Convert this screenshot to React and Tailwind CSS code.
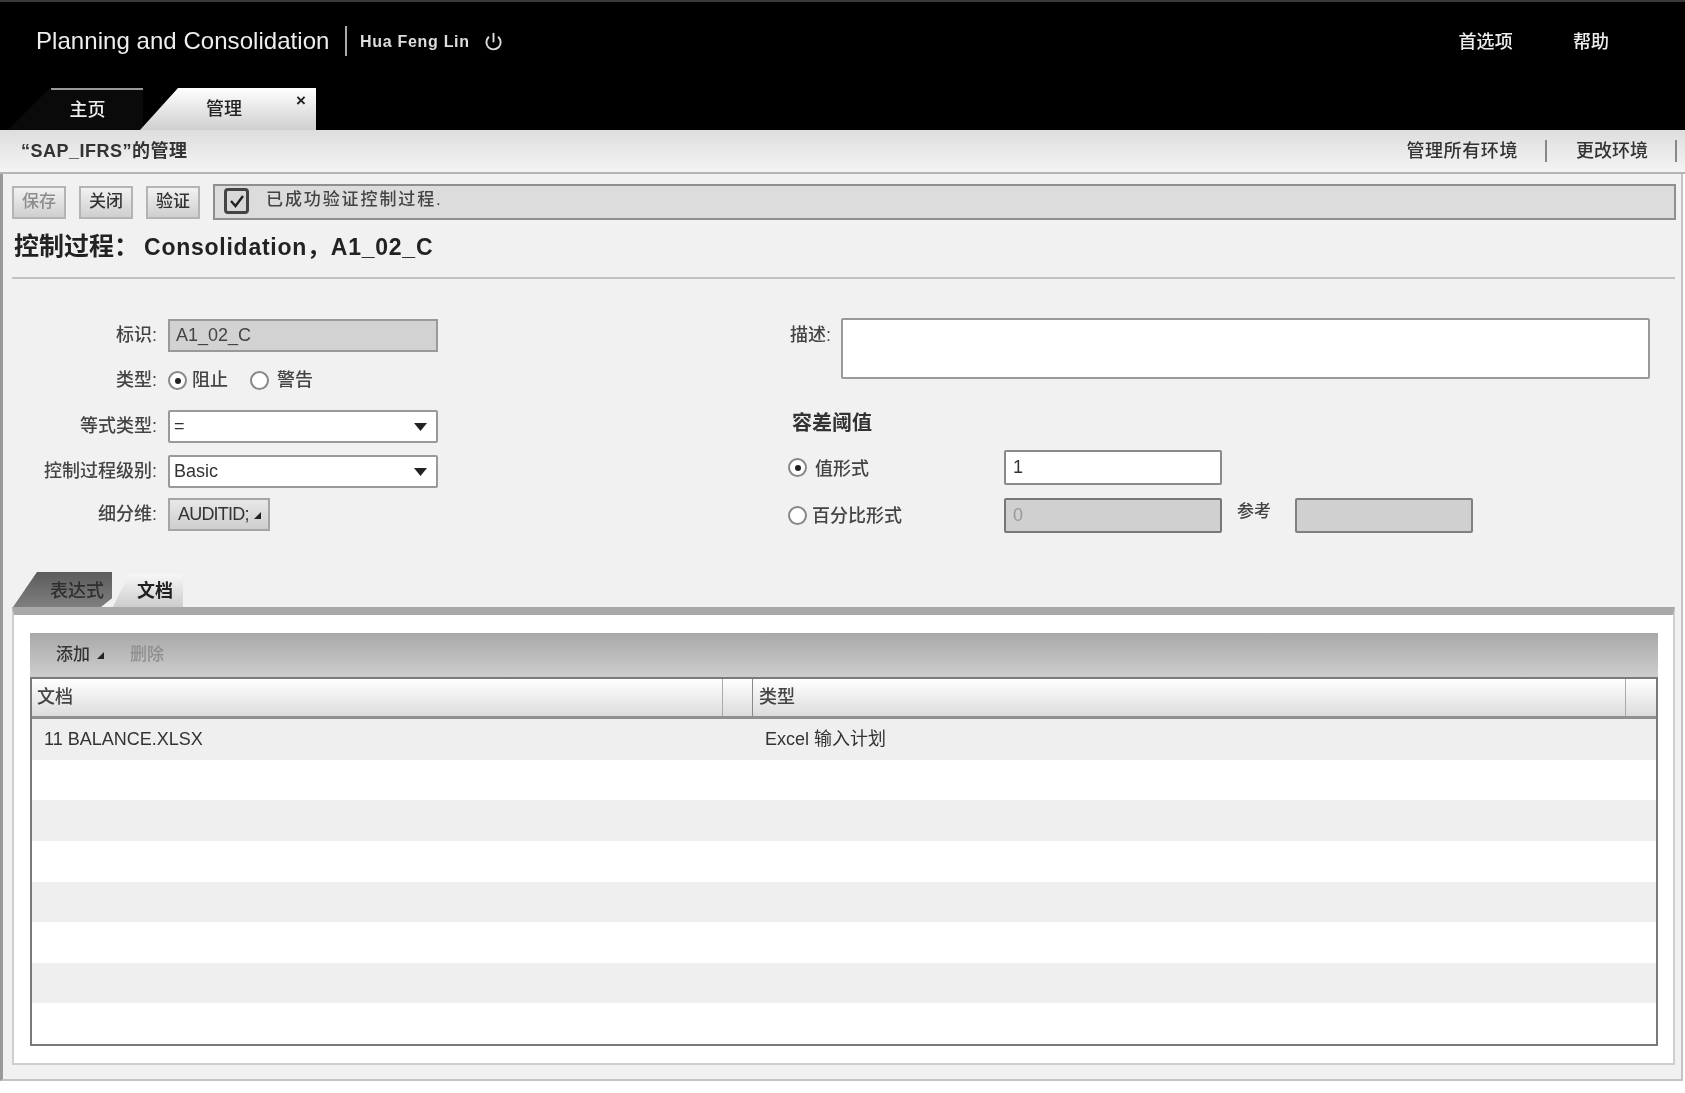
import { Power } from "lucide-react";

const font = { fontFamily: '"Liberation Sans", "Noto Sans CJK SC", sans-serif' };

const rows = [
  { file: "11 BALANCE.XLSX", type: "Excel 输入计划" },
  {}, {}, {}, {}, {}, {}, {},
];

function Radio({ checked, className = "" }) {
  return (
    <span className={`flex h-[19px] w-[19px] shrink-0 items-center justify-center rounded-full border-2 border-[#888] bg-white ${className}`}>
      {checked && <span className="h-[6px] w-[6px] rounded-full bg-[#222]" />}
    </span>
  );
}

function Corner() {
  return (
    <svg width="8" height="8" viewBox="0 0 8 8" className="shrink-0">
      <path d="M8 1V8H1Z" fill="#222" />
    </svg>
  );
}

function Select({ value, className = "" }) {
  return (
    <div className={`flex h-[33px] w-[270px] items-center justify-between rounded-[2px] border-2 border-[#999] bg-white pl-[4px] pr-[9px] text-[18px] text-[#333] ${className}`}>
      <span>{value}</span>
      <svg width="13" height="8" viewBox="0 0 13 8">
        <path d="M0 0H13L6.5 8Z" fill="#222" />
      </svg>
    </div>
  );
}

function ToolButton({ label, disabled }) {
  return (
    <div className={`flex h-[33px] w-[54px] items-center justify-center border-2 border-[#b4b4b4] bg-gradient-to-b from-[#f2f2f2] to-[#cfcfcf] text-[17px] font-medium ${disabled ? "text-[#8c8c8c]" : "text-[#333]"}`}>
      {label}
    </div>
  );
}

function Label({ children }) {
  return <div className="w-[155px] shrink-0 pr-px text-right text-[18px] font-medium text-[#444]">{children}:</div>;
}

export default function App() {
  return (
    <div style={font} className="flex h-[1093px] w-full flex-col overflow-hidden bg-white blur-[0.6px]">
      <header className="flex h-[130px] flex-col border-t-2 border-[#3a3a3a] bg-black text-[#eee]">
        <div className="flex h-[77px] items-center pl-[36px] pr-[76px]">
          <span className="w-[293px] whitespace-nowrap text-[24px] tracking-[0.05px]">Planning and Consolidation</span>
          <span className="ml-[16px] h-[30px] w-[2px] bg-[#aaa]" />
          <span className="ml-[13px] pt-[2px] text-[16px] font-semibold tracking-[0.7px] text-[#ddd]">Hua Feng Lin</span>
          <Power size={19} strokeWidth={2.4} className="ml-[14px] mt-[2px] text-[#ddd]" />
          <span className="ml-auto pt-[3px] text-[18px] font-medium tracking-[0.2px]">首选项</span>
          <span className="ml-[60px] pt-[3px] text-[18px] font-medium">帮助</span>
        </div>
        <div className="flex h-[51px] items-end">
          <div className="relative ml-[8px] flex h-[42px] w-[135px] items-center justify-center bg-[#0a0a0a] pl-[24px] pt-[2px] text-[18px] font-medium text-[#eee] [clip-path:polygon(0_100%,42px_0,100%_0,100%_100%)]">
            <span className="absolute right-0 top-0 h-[2px] w-[92px] bg-[#999]" />
            主页
          </div>
          <div className="relative -ml-[3px] flex h-[42px] w-[176px] items-center justify-center bg-gradient-to-b from-white to-[#cfcfcf] pr-[8px] text-[18px] font-medium text-[#222] [clip-path:polygon(0_100%,38px_0,100%_0,100%_100%)]">
            管理
            <span className="absolute right-[10px] top-[4px] text-[17px] font-bold leading-none">×</span>
          </div>
        </div>
      </header>

      <div className="flex h-[44px] shrink-0 items-center border-b-2 border-[#b5b5b5] bg-gradient-to-b from-[#dedede] to-[#f4f4f4] pl-[21px] pr-[8px] text-[#333]">
        <span className="text-[18px] font-bold tracking-[0.5px]">“SAP_IFRS”的管理</span>
        <span className="ml-auto text-[18px] font-medium tracking-[0.6px]">管理所有环境</span>
        <span className="ml-[27px] h-[22px] w-[2px] bg-[#888]" />
        <span className="ml-[29px] text-[18px] font-medium">更改环境</span>
        <span className="ml-[27px] h-[22px] w-[2px] bg-[#888]" />
      </div>

      <div className="mr-[2px] flex h-[907px] shrink-0 flex-col border-b-2 border-l-[3px] border-r-2 border-[#c4c4c4] border-l-[#9a9a9a] bg-[#f1f1f1] pb-[14px]">
        <div className="mt-[10px] flex h-[36px] shrink-0 items-center pl-[9px] pr-[5px]">
          <div className="flex gap-[13px]">
            <ToolButton label="保存" disabled />
            <ToolButton label="关闭" />
            <ToolButton label="验证" />
          </div>
          <div className="ml-[13px] flex h-[36px] flex-1 items-center border-2 border-[#8f8f8f] bg-[#dcdcdc] pb-[3px] pl-[9px]">
            <span className="flex h-[26px] w-[25px] items-center justify-center rounded-[4px] border-[3px] border-[#444] bg-[#d8d8d8]">
              <svg width="16" height="14" viewBox="0 0 16 14">
                <path d="M2 7L6.5 12L14 2" fill="none" stroke="#222" strokeWidth="2.4" />
              </svg>
            </span>
            <span className="ml-[17px] pb-[2px] text-[17px] font-medium tracking-[1.9px] text-[#444]">已成功验证控制过程.</span>
          </div>
        </div>

        <div className="ml-[9px] mr-[6px] flex h-[59px] shrink-0 items-center border-b-2 border-[#c2c2c2] pl-[2px] pb-[3px] text-[#222]">
          <span className="text-[25px] font-bold">控制过程：</span>
          <span className="ml-[5px] text-[23px] font-bold tracking-[0.75px]">Consolidation，A1_02_C</span>
        </div>

        <div className="flex h-[293px] shrink-0 pt-[40px]">
          <div className="w-[785px] shrink-0">
            <div className="flex h-[33px] items-center gap-[10px]">
              <Label>标识</Label>
              <div className="flex h-[33px] w-[270px] items-center border-2 border-[#999] bg-[#d2d2d2] pl-[6px] text-[18px] text-[#444]">A1_02_C</div>
            </div>
            <div className="mt-[12px] flex h-[33px] items-center gap-[10px]">
              <Label>类型</Label>
              <div className="flex items-center text-[18px] font-medium text-[#444]">
                <Radio checked />
                <span className="ml-[5px]">阻止</span>
                <Radio className="ml-[22px]" />
                <span className="ml-[8px]">警告</span>
              </div>
            </div>
            <div className="mt-[13px] flex h-[33px] items-center gap-[10px]">
              <Label>等式类型</Label>
              <Select value="=" />
            </div>
            <div className="mt-[12px] flex h-[33px] items-center gap-[10px]">
              <Label>控制过程级别</Label>
              <Select value="Basic" />
            </div>
            <div className="mt-[10px] flex h-[33px] items-center gap-[10px]">
              <Label>细分维</Label>
              <div className="flex h-[33px] w-[102px] items-center gap-[4px] border-2 border-[#a5a5a5] bg-gradient-to-b from-[#e8e8e8] to-[#cecece] pl-[8px] text-[18px] tracking-[-0.8px] text-[#333]">
                AUDITID;
                <Corner />
              </div>
            </div>
          </div>

          <div className="flex-1 pr-[31px]">
            <div className="-mt-px flex h-[61px] items-start">
              <span className="ml-[2px] mt-[5px] w-[51px] text-[18px] font-medium leading-[24px] text-[#444]">描述:</span>
              <div className="h-[61px] flex-1 rounded-[2px] border-2 border-[#999] bg-white" />
            </div>
            <div className="ml-[4px] mt-[32px] text-[20px] font-bold leading-[24px] text-[#333]">容差阈值</div>
            <div className="mt-[15px] flex h-[35px] items-center">
              <Radio checked />
              <span className="ml-[8px] w-[189px] pt-[3px] text-[18px] font-medium text-[#444]">值形式</span>
              <div className="flex h-[35px] w-[218px] items-center rounded-[2px] border-2 border-[#8a8a8a] bg-white pl-[7px] text-[18px] text-[#333]">1</div>
            </div>
            <div className="mt-[13px] flex h-[35px] items-center">
              <Radio />
              <span className="ml-[5px] w-[192px] pt-[2px] text-[18px] font-medium text-[#444]">百分比形式</span>
              <div className="flex h-[35px] w-[218px] items-center rounded-[2px] border-2 border-[#777] bg-[#d0d0d0] pl-[7px] text-[18px] text-[#999]">0</div>
              <span className="ml-[15px] mb-[7px] text-[17px] font-medium text-[#444]">参考</span>
              <div className="ml-[24px] h-[35px] w-[178px] rounded-[2px] border-2 border-[#808080] bg-[#d0d0d0]" />
            </div>
          </div>
        </div>

        <div className="flex h-[35px] shrink-0 items-end pl-[10px]">
          <div className="flex h-[35px] w-[99px] items-center justify-end bg-gradient-to-b from-[#5c5c5c] to-[#7f7f7f] pr-[8px] pt-[3px] text-[18px] font-medium text-[#2e2e2e] [clip-path:polygon(0_100%,24px_0,100%_0,100%_75%,88px_100%)]">
            表达式
          </div>
          <div className="ml-px flex h-[33px] w-[70px] items-center justify-end bg-gradient-to-b from-[#f7f7f7] to-[#cdcdcd] pr-[10px] pt-[2px] text-[18px] font-bold text-[#222] [clip-path:polygon(0_100%,16px_0,100%_0,100%_100%)]">
            文档
          </div>
        </div>

        <div className="ml-[9px] mr-[6px] flex min-h-0 flex-1 flex-col border-x-2 border-b-2 border-t-[8px] border-[#cfcfcf] border-t-[#a9a9a9] bg-white pb-[17px] pl-[16px] pr-[15px] pt-[18px]">
          <div className="flex h-[44px] shrink-0 items-center bg-gradient-to-b from-[#a9a9a9] to-[#cdcdcd] pl-[26px] text-[17px] font-medium">
            <span className="text-[#333]">添加</span>
            <span className="ml-[6px]"><Corner /></span>
            <span className="ml-[26px] text-[#8f8f8f]">删除</span>
          </div>
          <div className="flex min-h-0 flex-1 flex-col border-2 border-[#7a7a7a]">
            <div className="flex h-[40px] shrink-0 items-stretch border-b-[3px] border-[#909090] bg-gradient-to-b from-white to-[#dcdcdc] text-[18px] font-medium text-[#444]">
              <div className="flex w-[691px] items-center border-r border-[#aaa] pl-[5px]">文档</div>
              <div className="w-[30px] border-r border-[#888]" />
              <div className="flex flex-1 items-center border-r border-[#aaa] pl-[6px]">类型</div>
              <div className="w-[30px]" />
            </div>
            <div className="flex min-h-0 flex-1 flex-col">
              {rows.map((row, i) => (
                <div key={i} className={`flex flex-1 items-center text-[18px] text-[#333] ${i % 2 === 0 ? "bg-[#efefef]" : "bg-white"}`}>
                  <span className="w-[722px] pl-[12px]">{row.file}</span>
                  <span className="pl-[11px]">{row.type}</span>
                </div>
              ))}
            </div>
          </div>
        </div>
      </div>
    </div>
  );
}
